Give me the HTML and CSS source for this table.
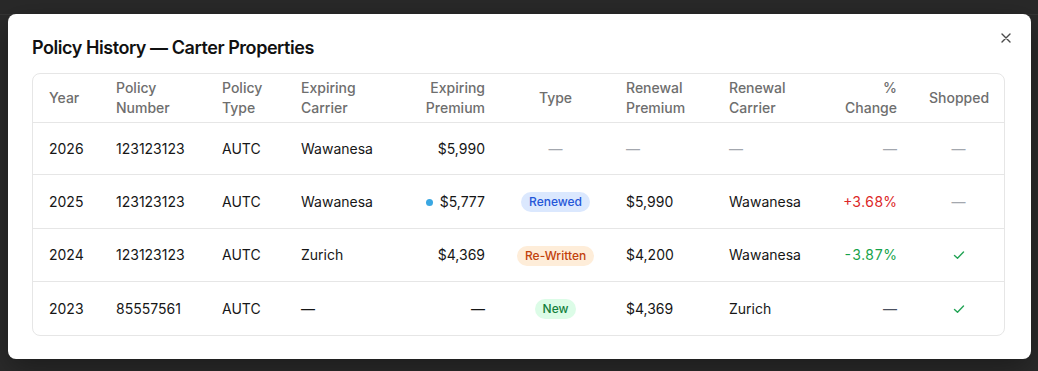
FILE: index.html
```html
<!DOCTYPE html>
<html lang="en">
<head>
    <meta charset="UTF-8">
    <title>Policy History</title>
    <link rel="stylesheet" href="styles.css">
</head>
<body>
    <div class="backdrop-bar"></div>
    <div class="modal">
        <button class="close" aria-label="Close">
            <svg width="10" height="10" viewBox="0 0 10 10">
                <path d="M1 1 L9 9 M9 1 L1 9" stroke="#4a4a4a" stroke-width="1.4" stroke-linecap="round" fill="none"/>
            </svg>
        </button>
        <h1 class="title">Policy History — Carter Properties</h1>

        <div class="table-wrap">
            <table class="history">
                <colgroup>
                    <col style="width:67px">
                    <col style="width:106px">
                    <col style="width:79px">
                    <col style="width:110px">
                    <col style="width:106px">
                    <col style="width:109px">
                    <col style="width:103px">
                    <col style="width:107px">
                    <col style="width:93px">
                    <col style="width:91px">
                </colgroup>
                <thead>
                    <tr>
                        <th>Year</th>
                        <th>Policy<br>Number</th>
                        <th>Policy<br>Type</th>
                        <th>Expiring<br>Carrier</th>
                        <th class="num">Expiring<br>Premium</th>
                        <th class="mid">Type</th>
                        <th>Renewal<br>Premium</th>
                        <th>Renewal<br>Carrier</th>
                        <th class="num">%<br>Change</th>
                        <th class="mid">Shopped</th>
                    </tr>
                </thead>
                <tbody>
                    <tr>
                        <td>2026</td>
                        <td>123123123</td>
                        <td>AUTC</td>
                        <td>Wawanesa</td>
                        <td class="num">$5,990</td>
                        <td class="mid empty">—</td>
                        <td class="empty">—</td>
                        <td class="empty">—</td>
                        <td class="num empty">—</td>
                        <td class="mid empty">—</td>
                    </tr>
                    <tr>
                        <td>2025</td>
                        <td>123123123</td>
                        <td>AUTC</td>
                        <td>Wawanesa</td>
                        <td class="num"><span class="dot"></span>$5,777</td>
                        <td class="mid"><span class="badge renewed">Renewed</span></td>
                        <td>$5,990</td>
                        <td>Wawanesa</td>
                        <td class="num change up">+3.68%</td>
                        <td class="mid empty">—</td>
                    </tr>
                    <tr>
                        <td>2024</td>
                        <td>123123123</td>
                        <td>AUTC</td>
                        <td>Zurich</td>
                        <td class="num">$4,369</td>
                        <td class="mid"><span class="badge rewritten">Re-Written</span></td>
                        <td>$4,200</td>
                        <td>Wawanesa</td>
                        <td class="num change down">-3.87%</td>
                        <td class="mid">
                            <svg class="check" width="12" height="12" viewBox="0 0 12 12">
                                <path d="M1.5 6.5 L4.5 9.2 L10.5 3" stroke="#22a355" stroke-width="1.4" fill="none" stroke-linecap="round" stroke-linejoin="round"/>
                            </svg>
                        </td>
                    </tr>
                    <tr>
                        <td>2023</td>
                        <td>85557561</td>
                        <td>AUTC</td>
                        <td>—</td>
                        <td class="num">—</td>
                        <td class="mid"><span class="badge new">New</span></td>
                        <td>$4,369</td>
                        <td>Zurich</td>
                        <td class="num muted">—</td>
                        <td class="mid">
                            <svg class="check" width="12" height="12" viewBox="0 0 12 12">
                                <path d="M1.5 6.5 L4.5 9.2 L10.5 3" stroke="#22a355" stroke-width="1.4" fill="none" stroke-linecap="round" stroke-linejoin="round"/>
                            </svg>
                        </td>
                    </tr>
                </tbody>
            </table>
        </div>
    </div>
</body>
</html>
```

FILE: styles.css
```css
body {
    margin: 0;
    background-color: #2b2b2b;
    font-family: Inter, 'Noto Sans', sans-serif;
    color: #161616;
    height: 371px;
    overflow: hidden;
}
.backdrop-bar {
    height: 14px;
    background-color: #292929;
    border-bottom: 1px solid #353535;
    margin-bottom: -1px;
}
.modal {
    position: relative;
    width: 1023px;
    height: 345px;
    box-sizing: border-box;
    margin-left: 8px;
    padding: 20px 26px 24px 24px;
    background-color: #fff;
    border-radius: 8px;
    box-shadow: 0 10px 30px rgba(0, 0, 0, 0.35);
}
.close {
    position: absolute;
    top: 14px;
    right: 15px;
    width: 20px;
    height: 20px;
    padding: 0;
    border: none;
    background: none;
    display: flex;
    align-items: center;
    justify-content: center;
    cursor: pointer;
}
.title {
    margin: 0 0 11px;
    font-size: 18px;
    line-height: 28px;
    font-weight: 600;
    color: #111;
    letter-spacing: -0.45px;
}
.table-wrap {
    border: 1px solid #e6e6e6;
    border-radius: 8px;
    overflow: hidden;
}
.history {
    width: 100%;
    border-collapse: collapse;
    table-layout: fixed;
    font-size: 14px;
    line-height: 20px;
}
.history th {
    padding: 4px 16px;
    text-align: left;
    font-weight: 500;
    color: #6e6e6e;
    border-bottom: 1px solid #e6e6e6;
}
.history td {
    padding: 15.9px 16px 15.6px;
    white-space: nowrap;
    border-bottom: 1px solid #e6e6e6;
}
.history tbody tr:last-child td {
    border-bottom: none;
}
.history .num {
    text-align: right;
}
.history .mid {
    text-align: center;
}
.history .empty {
    color: #a3a7ae;
}
.history .muted {
    color: #4b5160;
}
.dot {
    display: inline-block;
    width: 7px;
    height: 7px;
    border-radius: 50%;
    background-color: #3aa7e2;
    margin-right: 7px;
    vertical-align: 1px;
}
.badge {
    display: inline-block;
    padding: 2px 8px;
    font-size: 12px;
    line-height: 16px;
    font-weight: 500;
    border-radius: 999px;
}
.renewed {
    background-color: #dbe8fe;
    color: #2456d8;
}
.rewritten {
    background-color: #feedd9;
    color: #c2410c;
}
.new {
    background-color: #dcfce7;
    color: #15803d;
}
.change {
    font-variant-numeric: tabular-nums;
    font-feature-settings: "tnum";
}
.up {
    color: #dc2626;
}
.down {
    color: #16a34a;
}
.check {
    vertical-align: -1px;
}
```
